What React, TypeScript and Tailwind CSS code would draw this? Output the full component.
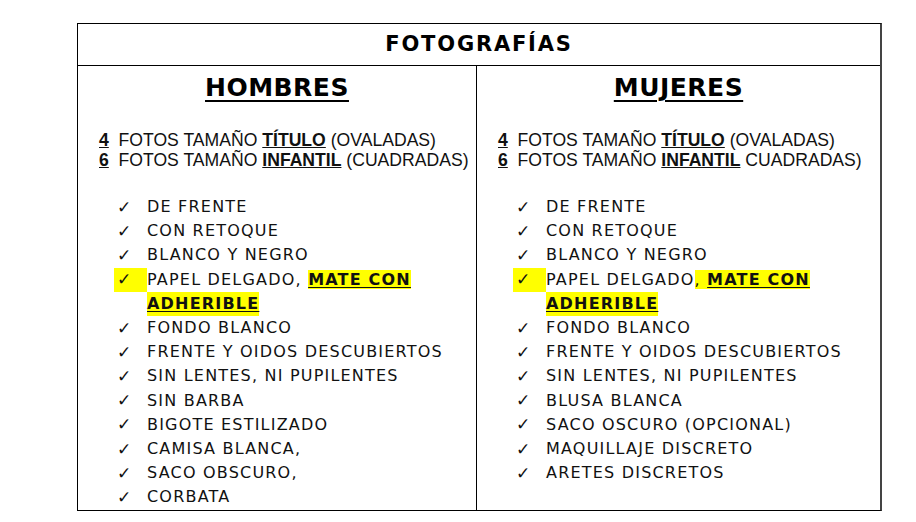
const comic = "font-['DejaVu_Sans',sans-serif]";
const arial = "font-['Liberation_Sans',Arial,sans-serif]";

const hombres: string[] = [
  "DE FRENTE",
  "CON RETOQUE",
  "BLANCO Y NEGRO",
  "__PAPEL__",
  "FONDO BLANCO",
  "FRENTE Y OIDOS DESCUBIERTOS",
  "SIN LENTES, NI PUPILENTES",
  "SIN BARBA",
  "BIGOTE ESTILIZADO",
  "CAMISA BLANCA,",
  "SACO OBSCURO,",
  "CORBATA",
];

const mujeres: string[] = [
  "DE FRENTE",
  "CON RETOQUE",
  "BLANCO Y NEGRO",
  "__PAPEL__",
  "FONDO BLANCO",
  "FRENTE Y OIDOS DESCUBIERTOS",
  "SIN LENTES, NI PUPILENTES",
  "BLUSA BLANCA",
  "SACO OSCURO (OPCIONAL)",
  "MAQUILLAJE DISCRETO",
  "ARETES DISCRETOS",
];

// columna del ✓ con alto fijo para no inflar la fila
function CheckCell({ hl }: { hl?: boolean }) {
  return (
    <span
      className={`flex h-[24px] w-[33px] shrink-0 items-center pl-[3px] text-[17px] font-bold leading-none tracking-normal ${
        hl ? "bg-[#ffff00]" : ""
      }`}
    >
      ✓
    </span>
  );
}

function Papel({ commaHl }: { commaHl: boolean }) {
  return (
    <>
      <span className="flex">
        <CheckCell hl />
        <span>
          PAPEL DELGADO
          {commaHl ? (
            <span className="bg-[#ffff00]">
              , <b className="font-bold underline underline-offset-2">MATE CON</b>
            </span>
          ) : (
            <>
              ,{" "}
              <b className="bg-[#ffff00] font-bold underline underline-offset-2">MATE CON</b>
            </>
          )}
        </span>
      </span>
      <span className="flex pl-[33px]">
        <b className="bg-[#ffff00] font-bold underline underline-offset-2">ADHERIBLE</b>
      </span>
    </>
  );
}

function Column({
  title,
  infantil,
  items,
  commaHl,
  right,
}: {
  title: string;
  infantil: string;
  items: string[];
  commaHl: boolean;
  right?: boolean;
}) {
  return (
    <div className={`pt-[7px] ${right ? "" : "border-r border-black"}`}>
      <h2
        className={`${comic} text-center text-[25px] font-bold leading-[30px] tracking-[0.5px] underline decoration-2 underline-offset-4`}
      >
        {title}
      </h2>

      <div className={`${arial} mt-[27px] pl-[21px] text-[17.6px] leading-[20px] text-[#111]`}>
        <p>
          <b className="underline">4</b>&nbsp; FOTOS TAMAÑO <b className="underline">TÍTULO</b> (OVALADAS)
        </p>
        <p>
          <b className="underline">6</b>&nbsp; FOTOS TAMAÑO <b className="underline">INFANTIL</b> {infantil}
        </p>
      </div>

      <ul className={`${comic} mt-[25px] pl-[36px] text-[16px] leading-[24.2px] tracking-[1.2px] text-[#111]`}>
        {items.map((t, i) =>
          t === "__PAPEL__" ? (
            <li key={i}>
              <Papel commaHl={commaHl} />
            </li>
          ) : (
            <li key={i} className="flex">
              <CheckCell />
              <span>{t}</span>
            </li>
          )
        )}
      </ul>
    </div>
  );
}

export default function App() {
  return (
    <div className="min-h-[522px] bg-white pt-[23px]">
      <div className="ml-[77px] w-[805px] border border-black border-r-2 border-r-[#444]">
        <div
          className={`${comic} flex h-[42px] items-center justify-center border-b border-black text-[21px] font-bold tracking-[1.8px]`}
        >
          FOTOGRAFÍAS
        </div>
        <div className="grid grid-cols-[399px_1fr]">
          <Column title="HOMBRES" infantil="(CUADRADAS)" items={hombres} commaHl={false} />
          <Column title="MUJERES" infantil="CUADRADAS)" items={mujeres} commaHl={true} right />
        </div>
      </div>
    </div>
  );
}
